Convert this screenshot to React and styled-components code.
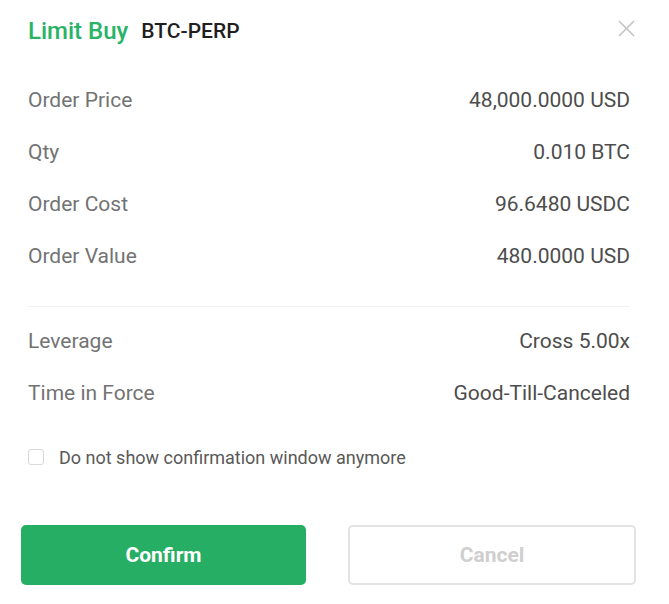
import React, { useState } from 'react';
import styled, { createGlobalStyle } from 'styled-components';

const GlobalStyle = createGlobalStyle`
  html, body {
    margin: 0;
    padding: 0;
    background: #ffffff;
  }
  body {
    font-family: Roboto, "Noto Sans", sans-serif;
  }
`;

const Dialog = styled.div`
  width: 669px;
  height: 604px;
  box-sizing: border-box;
  background: #fff;
  display: flex;
  flex-direction: column;
  padding: 0 39px 0 28px;
`;

const Header = styled.div`
  display: flex;
  align-items: center;
  height: 62px;
  margin-bottom: 12px;
`;

const Title = styled.span`
  font-size: 24px;
  font-weight: 500;
  color: #29b366;
  margin-right: 13px;
`;

const Symbol = styled.span`
  font-size: 21px;
  font-weight: 500;
  color: #1f1f1f;
  flex: 1;
`;

const CloseButton = styled.button`
  border: none;
  background: none;
  padding: 0;
  width: 20px;
  height: 20px;
  cursor: pointer;
  display: flex;
  align-items: center;
  justify-content: center;
  margin: -6px -6px 0 0;
`;

const Section = styled.div`
  display: flex;
  flex-direction: column;
`;

const Row = styled.div`
  display: flex;
  justify-content: space-between;
  align-items: center;
  height: 52px;
  font-size: 21px;
`;

const Label = styled.span`
  color: #737373;
`;

const Value = styled.span`
  color: #4d4d4d;
`;

const Divider = styled.div`
  height: 1px;
  background: #f2f2f2;
  margin: 24px 0 8px;
`;

const CheckRow = styled.label`
  display: flex;
  align-items: center;
  gap: 15px;
  margin-top: 28px;
  height: 20px;
  font-size: 18px;
  color: #595959;
  cursor: pointer;
`;

const Box = styled.span`
  width: 16px;
  height: 16px;
  border: 1px solid #d9d9d9;
  border-radius: 3px;
  box-sizing: border-box;
  background: ${props => (props.checked ? '#29b366' : '#fff')};
`;

const Actions = styled.div`
  display: grid;
  grid-template-columns: 285px 288px;
  justify-content: space-between;
  margin: 58px -6px 0 -7px;
`;

const Button = styled.button`
  height: 60px;
  border-radius: 5px;
  font-family: Roboto, "Noto Sans", sans-serif;
  font-size: 21px;
  font-weight: 700;
  cursor: pointer;
  background: ${props => (props.primary ? '#26ae65' : '#fff')};
  color: ${props => (props.primary ? '#fff' : '#cfcfcf')};
  border: ${props => (props.primary ? 'none' : '2px solid #e3e3e3')};
`;

const rows = [
  ['Order Price', '48,000.0000 USD'],
  ['Qty', '0.010 BTC'],
  ['Order Cost', '96.6480 USDC'],
  ['Order Value', '480.0000 USD'],
];

const extra = [
  ['Leverage', 'Cross 5.00x'],
  ['Time in Force', 'Good-Till-Canceled'],
];

export default function App() {
  const [checked, setChecked] = useState(false);
  return (
    <>
      <GlobalStyle />
      <Dialog>
        <Header>
          <Title>Limit Buy</Title>
          <Symbol>BTC-PERP</Symbol>
          <CloseButton aria-label="close">
            <svg width="17" height="17" viewBox="0 0 17 17">
              <path d="M1 1L16 16M16 1L1 16" stroke="#c4c4c4" strokeWidth="1.6" />
            </svg>
          </CloseButton>
        </Header>
        <Section>
          {rows.map(([l, v]) => (
            <Row key={l}>
              <Label>{l}</Label>
              <Value>{v}</Value>
            </Row>
          ))}
        </Section>
        <Divider />
        <Section>
          {extra.map(([l, v]) => (
            <Row key={l}>
              <Label>{l}</Label>
              <Value>{v}</Value>
            </Row>
          ))}
        </Section>
        <CheckRow onClick={() => setChecked(!checked)}>
          <Box checked={checked} />
          Do not show confirmation window anymore
        </CheckRow>
        <Actions>
          <Button primary>Confirm</Button>
          <Button>Cancel</Button>
        </Actions>
      </Dialog>
    </>
  );
}
